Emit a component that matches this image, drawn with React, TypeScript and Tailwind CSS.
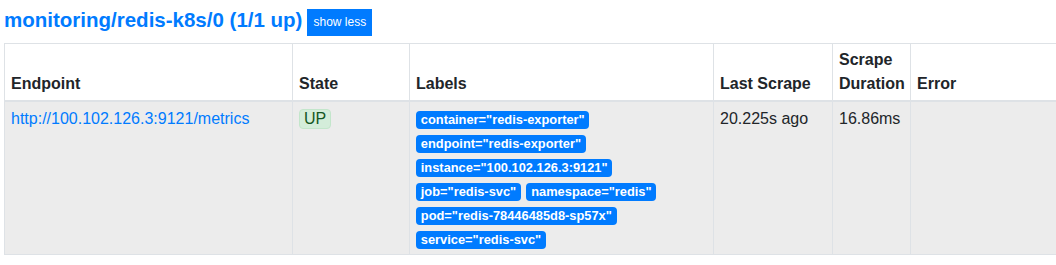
import React from 'react';

interface Target {
  endpoint: string;
  state: string;
  labels: Record<string, string>;
  lastScrape: string;
  duration: string;
  error: string;
}

const target: Target = {
  endpoint: 'http://100.102.126.3:9121/metrics',
  state: 'UP',
  labels: {
    container: 'redis-exporter',
    endpoint: 'redis-exporter',
    instance: '100.102.126.3:9121',
    job: 'redis-svc',
    namespace: 'redis',
    pod: 'redis-78446485d8-sp57x',
    service: 'redis-svc',
  },
  lastScrape: '20.225s ago',
  duration: '16.86ms',
  error: '',
};

const th = 'border border-[#dee2e6] border-b-2 px-[6px] py-[4px] text-left align-bottom font-bold';
const td = 'border border-[#dee2e6] px-[6px] py-[5px] align-top';

const App: React.FC = () => {
  return (
    <div
      className="w-[1056px] h-[265px] overflow-hidden bg-white px-[4px] text-[16px] leading-[24px] text-[#212529]"
      style={{ fontFamily: '"Liberation Sans", Arial, sans-serif' }}
    >
      <div className="flex items-start gap-[5px] pt-[8px] h-[43px]">
        <h2 className="text-[20.5px] leading-[24px] font-bold text-[#007bff]">
          monitoring/redis-k8s/0 (1/1 up)
        </h2>
        <button className="mt-[0.5px] bg-[#007bff] text-white text-[12px] leading-[18px] px-[6px] py-[4.5px]">
          show less
        </button>
      </div>

      <table className="table-fixed border-collapse w-[1060px]">
        <thead>
          <tr>
            <th className={`${th} w-[288px]`}>Endpoint</th>
            <th className={`${th} w-[117px]`}>State</th>
            <th className={`${th} w-[304px]`}>Labels</th>
            <th className={`${th} w-[119px]`}>Last Scrape</th>
            <th className={`${th} w-[78px]`}>Scrape Duration</th>
            <th className={th}>Error</th>
          </tr>
        </thead>
        <tbody>
          <tr className="bg-[#ececec]">
            <td className={`${td} pb-[3px]`}>
              <a href="#" className="text-[#007bff]">{target.endpoint}</a>
            </td>
            <td className={td}>
              <span className="inline-block leading-[18px] px-[4px] border border-[#c3e6cb] bg-[#d4edda] text-[#155724] rounded-[4px]">
                {target.state}
              </span>
            </td>
            <td className={`${td} pb-[3px]`}>
              {Object.entries(target.labels).map(([k, v]) => (
                <React.Fragment key={k}>
                  <span className="inline-block bg-[#007bff] text-white text-[12.85px] font-bold leading-none px-[4.8px] py-[2.6px] rounded-[4px] mr-[1px]">
                    {k}="{v}"
                  </span>{' '}
                </React.Fragment>
              ))}
            </td>
            <td className={td}>{target.lastScrape}</td>
            <td className={td}>{target.duration}</td>
            <td className={td}>{target.error}</td>
          </tr>
        </tbody>
      </table>
    </div>
  );
};

export default App;
